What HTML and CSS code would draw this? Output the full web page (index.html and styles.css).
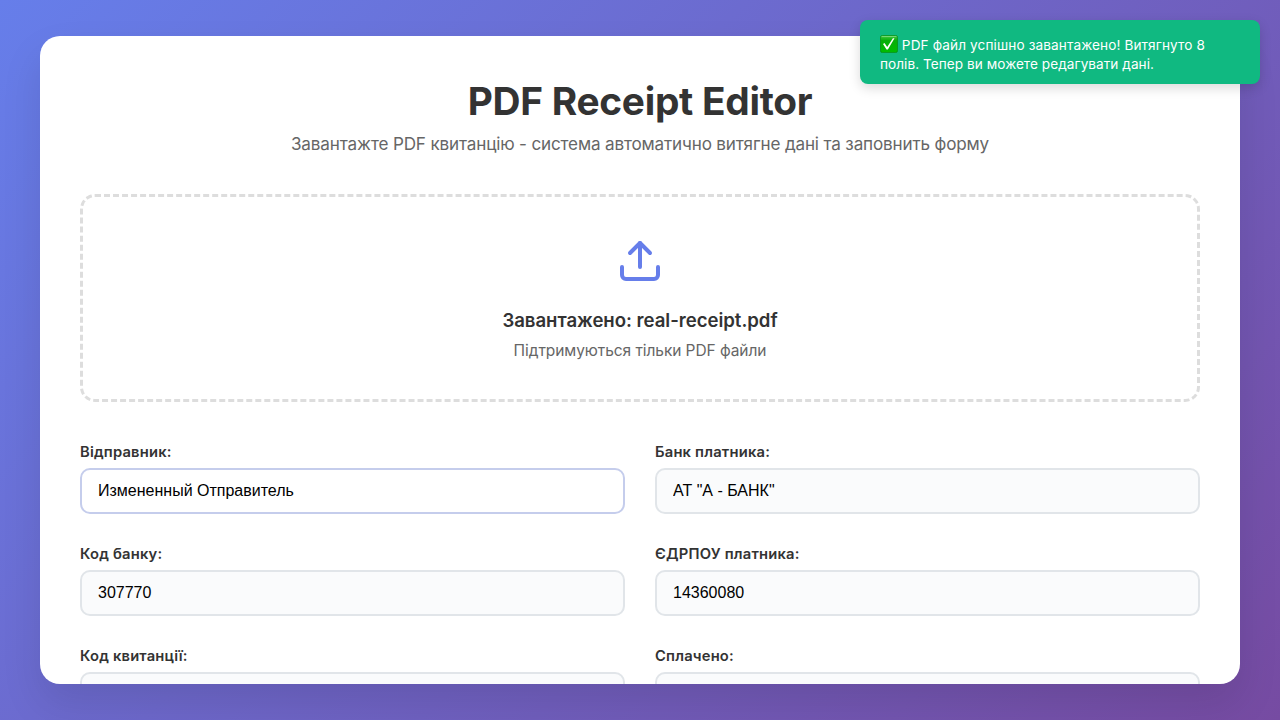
FILE: index.html
```html
<!DOCTYPE html>
<html lang="uk">
<head>
<meta charset="utf-8">
<title>PDF Receipt Editor</title>
<link rel="stylesheet" href="styles.css">
</head>
<body>
<main class="container">
  <header class="header">
    <h1 class="title"><span>PDF Receipt Editor</span></h1>
    <p class="subtitle"><span>Завантажте PDF квитанцію - система автоматично витягне дані та заповнить форму</span></p>
  </header>
  <section class="upload">
    <svg class="upload-icon" viewBox="0 0 24 24" fill="none" stroke="currentColor" stroke-width="2" stroke-linecap="round" stroke-linejoin="round">
      <path d="M21 15v4a2 2 0 0 1-2 2H5a2 2 0 0 1-2-2v-4"/>
      <polyline points="17 8 12 3 7 8"/>
      <line x1="12" y1="3" x2="12" y2="15"/>
    </svg>
    <h3 class="upload-title"><span>Завантажено: real-receipt.pdf</span></h3>
    <p class="upload-hint"><span>Підтримуються тільки PDF файли</span></p>
  </section>
  <form class="form">
    <div class="group"><label class="label" for="sender">Відправник:</label><input class="input input-active" id="sender" value="Измененный Отправитель"></div>
    <div class="group"><label class="label" for="bank">Банк платника:</label><input class="input" id="bank" value='АТ "А - БАНК"'></div>
    <div class="group"><label class="label" for="code">Код банку:</label><input class="input" id="code" value="307770"></div>
    <div class="group"><label class="label" for="edrpou">ЄДРПОУ платника:</label><input class="input" id="edrpou" value="14360080"></div>
    <div class="group"><label class="label" for="receipt">Код квитанції:</label><input class="input" id="receipt"></div>
    <div class="group"><label class="label" for="paid">Сплачено:</label><input class="input" id="paid"></div>
  </form>
</main>
<div class="toast">
  <svg class="toast-icon" viewBox="0 0 18 18">
    <defs>
      <linearGradient id="tick-bg" x1="0" y1="0" x2="0" y2="1"><stop offset="0" stop-color="#3fc540"/><stop offset=".3" stop-color="#08ae0a"/><stop offset="1" stop-color="#00bd00"/></linearGradient>
    </defs>
    <rect x=".4" y=".4" width="17.2" height="17.2" rx="2.2" fill="url(#tick-bg)" stroke="#078f18" stroke-width=".8"/>
    <path d="M1.5 1.6h15" stroke="#8ee08c" stroke-width=".8"/>
    <path d="M3 8.9l1.5-.8 2.7 4L12.9 3.2l1.6.1-6.6 11.3H6.5z" fill="#fff"/>
  </svg>
  <span class="toast-line toast-first">PDF файл успішно завантажено! Витягнуто 8</span>
  <br><span class="toast-line toast-second">полів. Тепер ви можете редагувати дані.</span>
</div>
</body>
</html>
```

FILE: styles.css
```css
* { box-sizing: border-box; margin: 0; padding: 0; }
body {
  height: 720px;
  padding: 36px 40px;
  overflow: hidden;
  font-family: Inter, "Liberation Sans", sans-serif;
  background: linear-gradient(135deg, #667eea 0%, #764ba2 100%);
}
.container {
  height: 648px;
  padding: 40px;
  overflow: hidden;
  background: #fff;
  border-radius: 20px;
  box-shadow: 0 20px 40px rgba(0, 0, 0, .1);
}
.header { margin-bottom: 40px; text-align: center; }
.title { padding-top: 1px; margin-bottom: 9px; font-size: 38.8px; font-weight: 700; line-height: 47px; letter-spacing: -.28px; color: #333; }
.subtitle { font-size: 17.1px; line-height: 21px; letter-spacing: -.16px; color: #666; }
.upload {
  height: 208px;
  margin-bottom: 40px;
  padding: 40px;
  text-align: center;
  border: 3px dashed #ddd;
  border-radius: 15px;
}
.upload-icon { display: block; width: 48px; height: 48px; margin: 0 auto 24px; color: #667eea; }
.upload-title { margin-bottom: 9px; font-size: 18.6px; font-weight: 600; line-height: 23px; letter-spacing: -.03px; color: #333; }
.upload-hint { font-size: 15.5px; line-height: 19px; letter-spacing: -.07px; color: #666; }
.form { display: grid; grid-template-columns: 1fr 1fr; gap: 30px; }
.group { display: flex; flex-direction: column; gap: 7px; }
.label { padding-top: 1px; font-size: 14.75px; font-weight: 600; line-height: 18px; letter-spacing: .19px; color: #333; }
.input {
  width: 100%;
  height: 46px;
  padding: 0 16px;
  font: 16px "Liberation Sans", Arial, sans-serif;
  color: #000;
  background: #fafbfc;
  border: 2px solid #e1e5e9;
  border-radius: 10px;
}
.input-active { background: #fff; border-color: #c5cdec; }
.toast {
  position: absolute;
  top: 20px;
  right: 20px;
  width: 400px;
  height: 64px;
  padding: 15px 20px;
  font-size: 13.6px;
  line-height: 19px;
  white-space: nowrap;
  color: #fff;
  background: #10b981;
  border-radius: 8px;
  box-shadow: 0 4px 12px rgba(0, 0, 0, .15);
}
.toast-icon { width: 18px; height: 18px; vertical-align: -3px; }
.toast-first { letter-spacing: .12px; }
.toast-second { letter-spacing: .05px; }
```
